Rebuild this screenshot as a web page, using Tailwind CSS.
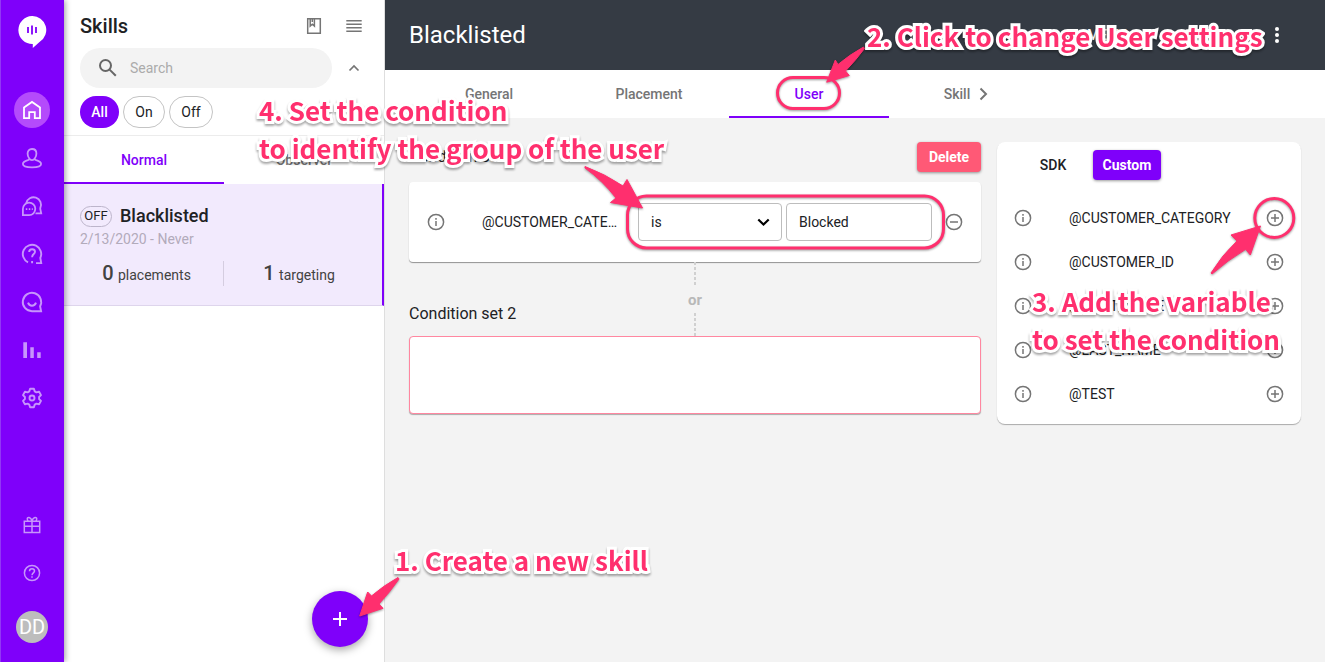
<!DOCTYPE html>
<html lang="en">
<head>
    <meta charset="UTF-8">
    <meta name="viewport" content="width=device-width, initial-scale=1.0">
    <script src="https://cdn.jsdelivr.net/npm/@tailwindcss/browser@4"></script>
    <title>Skills - Blacklisted</title>
</head>
<body class="font-[Roboto,sans-serif] text-sm text-[#202124] bg-[#f3f3f3]">

    <!-- Shared icons -->
    <svg class="hidden">
        <symbol id="info" viewBox="0 0 20 20"><g fill="none" stroke="currentColor" stroke-width="1.5"><circle cx="10" cy="10" r="7.6"/><path d="M10 9v5M10 6v1.7"/></g></symbol>
        <symbol id="plus" viewBox="0 0 20 20"><g fill="none" stroke="currentColor" stroke-width="1.5"><circle cx="10" cy="10" r="7.6"/><path d="M10 6v8M6 10h8"/></g></symbol>
        <symbol id="minus" viewBox="0 0 20 20"><g fill="none" stroke="currentColor" stroke-width="1.5"><circle cx="10" cy="10" r="7.6"/><path d="M6 10h8"/></g></symbol>
    </svg>

    <div class="relative flex h-screen min-h-[600px] overflow-hidden">

        <!-- Sidebar -->
        <nav class="relative z-10 flex w-16 shrink-0 flex-col items-center border-l border-[#9138f5] bg-[#7f00fa] pt-4 pr-px pb-[19px] text-[#c795fb] shadow-[1px_0_6px_rgba(0,0,0,0.4)]">
            <a href="#" aria-label="Logo" class="mb-[38px]">
                <svg class="h-8 w-8" viewBox="0 0 32 32">
                    <path fill="#fff" d="M16 0a14 14 0 1 0 .8 28v4l7-6.2A14 14 0 0 0 16 0z"/>
                    <path stroke="#7f00fa" stroke-width="1.8" d="M12 11v6M16 9.500v9M20 11v6"/>
                </svg>
            </a>
            <a href="#" aria-label="Home" class="flex h-12 w-12 items-center justify-center text-white">
                <span class="flex h-9 w-9 items-center justify-center rounded-full bg-[#b44bfb]">
                    <svg class="h-6 w-6" viewBox="0 0 24 24" fill="none" stroke="currentColor" stroke-width="1.8"><path d="M4 9.500l8-5.600 8 5.600v10.600h-5.200v-6h-5.600v6H4z"/></svg>
                </span>
            </a>
            <a href="#" aria-label="Users" class="flex h-12 w-12 items-center justify-center">
                <svg class="h-6 w-6" viewBox="0 0 24 24" fill="none" stroke="currentColor" stroke-width="1.8"><path d="M12 3c-2.900 0-4.400 2-4.400 4.500 0 1.900.6 3.500 1.500 4.700.5 1-.1 1.500-1.300 1.900-2.700.8-4.900 1.700-4.900 4 0 2.400 3.500 3.300 9.100 3.300s9.100-.9 9.100-3.300c0-2.300-2.200-3.200-4.900-4-1.200-.4-1.800-.9-1.300-1.900.9-1.200 1.500-2.800 1.500-4.700C16.400 5 14.900 3 12 3zM9.100 12.200c1.600 2.600 4.200 2.600 5.800 0"/></svg>
            </a>
            <a href="#" aria-label="Conversations" class="flex h-12 w-12 items-center justify-center">
                <svg class="h-6 w-6" viewBox="0 0 24 24" fill="none" stroke="currentColor" stroke-width="1.800"><path d="M6.200 9.200A7.500 7.500 0 1 1 20.300 14c-.2.700 0 1.400.2 2l.7 3.300h-5.700"/><path d="M2.900 21.100V15a6.200 6.200 0 1 1 6.200 6.100z"/><path stroke-dasharray="1.500 1.500" d="M5.800 15.200h7"/></svg>
            </a>
            <a href="#" aria-label="Questions" class="flex h-12 w-12 items-center justify-center">
                <svg class="h-6 w-6" viewBox="0 0 24 24" fill="none" stroke="currentColor" stroke-width="1.900"><path d="M8 20.300A9.200 9.200 0 1 1 20.300 16l.9 5.100h-5.200"/><path d="M9.200 10c0-1.700 1.200-2.700 2.900-2.700s2.900 1 2.900 2.500c0 2.300-2.900 2.300-2.900 5.400M12.100 19v2.200"/></svg>
            </a>
            <a href="#" aria-label="Skills" class="flex h-12 w-12 items-center justify-center">
                <svg class="h-6 w-6" viewBox="0 0 24 24" fill="none" stroke="currentColor" stroke-width="1.900"><path d="M12 21.200a9.200 9.200 0 1 1 8.100-4.900l1 4.900z"/><path d="M8 12.600c.7 2 2.200 3.100 4 3.100s3.300-1.100 4-3.100"/></svg>
            </a>
            <a href="#" aria-label="Statistics" class="flex h-12 w-12 items-center justify-center">
                <svg class="h-6 w-6" viewBox="0 0 24 24" fill="currentColor"><path d="M3.300 4.300H7V20H3.300zM10.300 9.300h3.500V20h-3.500zM17.200 14.300h3.500V20h-3.500z"/></svg>
            </a>
            <a href="#" aria-label="Settings" class="flex h-12 w-12 items-center justify-center">
                <svg class="h-6 w-6" viewBox="0 0 24 24" fill="none" stroke="currentColor" stroke-width="1.900" stroke-linejoin="round"><path d="M10.100 2.800h3.800l.8 2.600 1.700 1 2.700-.6 1.900 3.300L19.100 11v2l1.900 1.900-1.900 3.300-2.700-.6-1.700 1-.8 2.600h-3.800l-.8-2.600-1.700-1-2.700.6L3 14.900 4.900 13v-2L3 9.100l1.900-3.300 2.700.6 1.700-1z"/><circle cx="12" cy="12" r="2.500"/></svg>
            </a>
            <a href="#" aria-label="Gifts" class="mt-auto flex h-12 w-12 items-center justify-center">
                <svg class="h-5 w-5" viewBox="0 0 20 20" fill="none" stroke="currentColor" stroke-width="1.500"><path d="M2.300 6.200h15.400v11.200H2.300zM2.300 11.200h15.400M10 6v11M10 6C8.500 1.500 5 2 5.300 4.200c.1 1 .7 2 1.700 2M10 6c1.500-4.500 5-4 4.700-1.800-.1 1-.7 2-1.700 2"/></svg>
            </a>
            <a href="#" aria-label="Help" class="flex h-12 w-12 items-center justify-center">
                <svg class="h-5 w-5" viewBox="0 0 20 20" fill="none" stroke="currentColor" stroke-width="1.500"><circle cx="10" cy="10" r="7.600"/><path d="M7.500 8.200C7.500 6.700 8.600 5.700 10 5.700s2.500 1 2.500 2.300c0 1.900-2.500 2-2.500 4.200M10 13.300v1.500"/></svg>
            </a>
            <button aria-label="Account" class="mt-[14px] flex h-8 w-8 items-center justify-center rounded-full bg-[#bdbdbd] text-xl text-white">DD</button>
        </nav>

        <!-- Skills list -->
        <section class="relative w-[321px] shrink-0 border-r border-[#dedede] bg-white">
            <div class="flex items-center px-4 pt-[10px]">
                <h2 class="flex-1 text-xl leading-8 font-medium">Skills</h2>
                <button aria-label="Guide" class="mr-5 text-[#757575]">
                    <svg class="h-5 w-5" viewBox="0 0 20 20" fill="none" stroke="currentColor" stroke-width="1.500"><path d="M3.700 2.700h12.600v14.600H3.700zM6.200 2.700v7.300l2.100-1.800 2.100 1.800V2.700M8.300 3v3"/></svg>
                </button>
                <button aria-label="List" class="mr-1 text-[#757575]">
                    <svg class="h-5 w-5" viewBox="0 0 20 20" stroke="currentColor" stroke-width="1.400"><path d="M2.300 4.700h15.400M2.300 8.200h15.400M2.300 11.700h15.400M2.300 15.200h15.400"/></svg>
                </button>
            </div>
            <div class="mt-[6px] flex items-center px-4">
                <div class="flex h-10 flex-1 items-center rounded-full bg-[#f3f3f3] pl-4">
                    <svg class="h-6 w-6 text-[#666]" viewBox="0 0 24 24" fill="none" stroke="currentColor" stroke-width="2"><circle cx="9.500" cy="9.500" r="5.500"/><path d="M13.600 13.600l6.200 6.200"/></svg>
                    <input type="text" aria-label="Search" placeholder="Search" class="ml-[10px] w-40 outline-none placeholder:text-[#ababab]">
                </div>
                <button aria-label="Collapse" class="mr-1 ml-3 text-[#757575]">
                    <svg class="h-5 w-5" viewBox="0 0 20 20" fill="none" stroke="currentColor" stroke-width="1.700"><path d="M5.500 12.500L10 8l4.500 4.500"/></svg>
                </button>
            </div>
            <div class="flex gap-1 border-b border-[#ececec] px-4 pt-2 pb-[7px]">
                <button class="h-8 w-[39px] rounded-full bg-[#7f00fa] font-medium text-white">All</button>
                <button class="h-8 w-[42px] rounded-full border border-[#c4c4c4]">On</button>
                <button class="h-8 w-11 rounded-full border border-[#c4c4c4]">Off</button>
            </div>
            <div class="flex h-12 font-medium">
                <button class="flex-1 border-b-2 border-[#7f00fa] pt-px text-[#7f00fa]">Normal</button>
                <button class="flex-1 border-b-2 border-transparent pt-px text-[#757575]">Observer</button>
            </div>
            <article class="h-[122px] border-r-2 border-b border-r-[#7f00fa] border-b-[#ded5ec] bg-[#f2eafd] pt-5">
                <div class="flex items-center gap-2 px-4">
                    <span class="flex h-[21px] w-8 items-center justify-center rounded-full border border-[#bdb5cb] text-[13px]">OFF</span>
                    <h3 class="text-lg leading-6 font-medium">Blacklisted</h3>
                </div>
                <p class="px-4 leading-[22px] text-[#b2abbb]">2/13/2020 - Never</p>
                <div class="mt-[9px] flex items-center text-[#424242]">
                    <p class="w-[159px] pl-[6px] text-center"><b class="mr-px text-xl leading-7 font-medium">0</b> placements</p>
                    <span class="h-[25px] w-px bg-[#d5cde0]"></span>
                    <p class="w-[150px] text-center"><b class="mr-px text-xl leading-7 font-medium">1</b> targeting</p>
                </div>
            </article>
            <button aria-label="New skill" class="absolute right-4 bottom-[15px] flex h-14 w-14 items-center justify-center rounded-full bg-[#7f00fa] text-white shadow-[0_3px_8px_rgba(0,0,0,0.35)]">
                <svg class="h-6 w-6" viewBox="0 0 24 24" stroke="currentColor" stroke-width="2"><path d="M12 5v14M5 12h14"/></svg>
            </button>
        </section>

        <!-- Skill editor -->
        <main class="min-w-0 flex-1">
            <header class="flex h-[70px] items-center bg-[#353b44] px-6 text-white">
                <h1 class="flex-1 text-2xl">Blacklisted</h1>
                <button class="mr-[136px] font-medium">MEMO</button>
                <button aria-label="More" class="mr-3">
                    <svg class="h-6 w-6" viewBox="0 0 24 24" fill="currentColor"><circle cx="12" cy="6" r="2"/><circle cx="12" cy="12" r="2"/><circle cx="12" cy="18" r="2"/></svg>
                </button>
            </header>
            <div class="flex h-12 bg-white px-6 font-medium text-[#757575]">
                <button class="w-40">General</button>
                <button class="w-40">Placement</button>
                <button class="w-40 border-b-2 border-[#7f00fa] pt-[2px] text-[#7f00fa]">User</button>
                <button class="flex w-40 items-center justify-center gap-1">Skill
                    <svg class="h-5 w-5" viewBox="0 0 20 20" fill="none" stroke="currentColor" stroke-width="2"><path d="M6.500 4.500l5.500 5.500-5.500 5.500"/></svg>
                </button>
            </div>

            <div class="flex items-start gap-4 p-6">
                <div class="min-w-0 flex-1">
                    <div class="flex h-[30px] items-center justify-between">
                        <h2 class="text-base">Condition set 1</h2>
                        <button class="h-[30px] w-16 rounded bg-[#ff5976] font-bold text-white shadow-[0_1px_3px_rgba(0,0,0,0.4)]">Delete</button>
                    </div>
                    <div class="mt-[10px] flex h-20 items-center rounded bg-white px-[17px] shadow-[0_1px_1px_rgba(0,0,0,0.4)]">
                        <svg class="h-5 w-5 shrink-0 text-[#757575]"><use href="#info"/></svg>
                        <span class="mr-4 ml-9 min-w-0 flex-1 truncate">@CUSTOMER_CATEGORY</span>
                        <div class="relative mr-1 w-36">
                            <select aria-label="Operator" class="h-[38px] w-full appearance-none rounded border border-[#bdbdbd] bg-white px-3">
                                <option>is</option>
                                <option>is not</option>
                            </select>
                            <svg class="pointer-events-none absolute top-[9px] right-2 h-5 w-5" viewBox="0 0 20 20" fill="none" stroke="#000" stroke-width="2.200"><path d="M4.300 7.500l5.200 5 5.200-5"/></svg>
                        </div>
                        <input type="text" aria-label="Value" value="Blocked" class="mr-3 h-[38px] w-[146px] rounded border border-[#bdbdbd] px-3">
                        <button aria-label="Remove condition" class="shrink-0 text-[#757575]"><svg class="h-5 w-5"><use href="#minus"/></svg></button>
                    </div>
                    <div class="grid h-[74px] grid-cols-3 items-center">
                        <h2 class="self-end pb-[10px] text-base">Condition set 2</h2>
                        <div class="flex h-full flex-col items-center text-[#b8b8b8]">
                            <span class="h-[25px] w-[2px] bg-[repeating-linear-gradient(to_bottom,#d0d0d0_0_3px,transparent_3px_5px)]"></span>
                            <span class="text-[15px] leading-[26px] font-bold">or</span>
                            <span class="w-[2px] flex-1 bg-[repeating-linear-gradient(to_bottom,#d0d0d0_0_3px,transparent_3px_5px)]"></span>
                        </div>
                    </div>
                    <div class="h-[78px] rounded border border-[#ff87a0] bg-white shadow-[0_1px_1px_rgba(0,0,0,0.3)]"></div>
                </div>

                <!-- Variables -->
                <aside class="w-[304px] shrink-0 rounded-lg bg-white py-2 shadow-[0_1px_1px_rgba(0,0,0,0.3)]">
                    <div class="mb-4 flex gap-4 pl-8">
                        <button class="h-[30px] w-12 font-medium">SDK</button>
                        <button class="h-[30px] w-[68px] rounded bg-[#7f00fa] font-bold text-white shadow-[0_1px_3px_rgba(0,0,0,0.4)]">Custom</button>
                    </div>
                    <ul>
                        <li class="flex h-11 items-center px-4">
                            <svg class="h-5 w-5 text-[#757575]"><use href="#info"/></svg>
                            <span class="ml-9 flex-1">@CUSTOMER_CATEGORY</span>
                            <button aria-label="Add @CUSTOMER_CATEGORY" class="text-[#757575]"><svg class="h-5 w-5"><use href="#plus"/></svg></button>
                        </li>
                        <li class="flex h-11 items-center px-4">
                            <svg class="h-5 w-5 text-[#757575]"><use href="#info"/></svg>
                            <span class="ml-9 flex-1">@CUSTOMER_ID</span>
                            <button aria-label="Add @CUSTOMER_ID" class="text-[#757575]"><svg class="h-5 w-5"><use href="#plus"/></svg></button>
                        </li>
                        <li class="flex h-11 items-center px-4">
                            <svg class="h-5 w-5 text-[#757575]"><use href="#info"/></svg>
                            <span class="ml-9 flex-1">@FIRST_NAME</span>
                            <button aria-label="Add @FIRST_NAME" class="text-[#757575]"><svg class="h-5 w-5"><use href="#plus"/></svg></button>
                        </li>
                        <li class="flex h-11 items-center px-4">
                            <svg class="h-5 w-5 text-[#757575]"><use href="#info"/></svg>
                            <span class="ml-9 flex-1">@LAST_NAME</span>
                            <button aria-label="Add @LAST_NAME" class="text-[#757575]"><svg class="h-5 w-5"><use href="#plus"/></svg></button>
                        </li>
                        <li class="flex h-11 items-center px-4">
                            <svg class="h-5 w-5 text-[#757575]"><use href="#info"/></svg>
                            <span class="ml-9 flex-1">@TEST</span>
                            <button aria-label="Add @TEST" class="text-[#757575]"><svg class="h-5 w-5"><use href="#plus"/></svg></button>
                        </li>
                    </ul>
                </aside>
            </div>
        </main>

        <!-- Tutorial callouts -->
        <div class="pointer-events-none absolute inset-0 z-20 font-['Noto_Sans_CJK_KR','Noto_Sans_CJK_JP',sans-serif] text-[26px] leading-[38px] font-bold whitespace-nowrap text-[#ff2f6e]">
            <svg class="absolute inset-0 h-full w-full drop-shadow-[0_1px_1px_rgba(0,0,0,0.4)]">
                <g fill="none" stroke="#ff2f6e" stroke-width="3">
                    <rect x="777.500" y="77.500" width="62" height="31" rx="15.500"/>
                    <rect x="627.500" y="196" width="316" height="52" rx="19"/>
                    <circle cx="1274.300" cy="218" r="19.500"/>
                </g>
                <g fill="#ff2f6e" stroke="#ff2f6e" stroke-width="1" stroke-linejoin="round">
                    <path d="M398 577.500Q383 586 371.500 596L367.700 592L359.700 616L383 608.300L379 604Q390 592 399 579z"/>
                    <path d="M863.500 47Q849 55 838 64.500L835.300 60L826.700 82.200L849.300 75.500L845.500 71Q856 60 864.500 48.500z"/>
                    <path d="M1211 273Q1222 255 1237 241L1231 235L1260.500 226L1250.300 255L1245.700 249.300Q1228 260 1212 274z"/>
                    <path d="M585 166.500Q605 174 623 186L627 179.500L642.500 208L610.500 202.500L616 198Q602 180 585 168z"/>
                </g>
            </svg>
            <p class="absolute top-[541px] left-[395px] drop-shadow-[0_2px_1px_rgba(0,0,0,0.35)] [-webkit-text-stroke:6px_white] [paint-order:stroke_fill]">1. Create a new skill</p>
            <p class="absolute top-[17px] left-[867px] drop-shadow-[0_2px_1px_rgba(0,0,0,0.35)] [-webkit-text-stroke:6px_white] [paint-order:stroke_fill]">2. Click to change User settings</p>
            <p class="absolute top-[282px] left-[1032px] drop-shadow-[0_2px_1px_rgba(0,0,0,0.35)] [-webkit-text-stroke:6px_white] [paint-order:stroke_fill]">3. Add the variable<br>to set the condition</p>
            <p class="absolute top-[91px] left-[259px] drop-shadow-[0_2px_1px_rgba(0,0,0,0.35)] [-webkit-text-stroke:6px_white] [paint-order:stroke_fill]">4. Set the condition<br>to identify the group of the user</p>
        </div>
    </div>
</body>
</html>
